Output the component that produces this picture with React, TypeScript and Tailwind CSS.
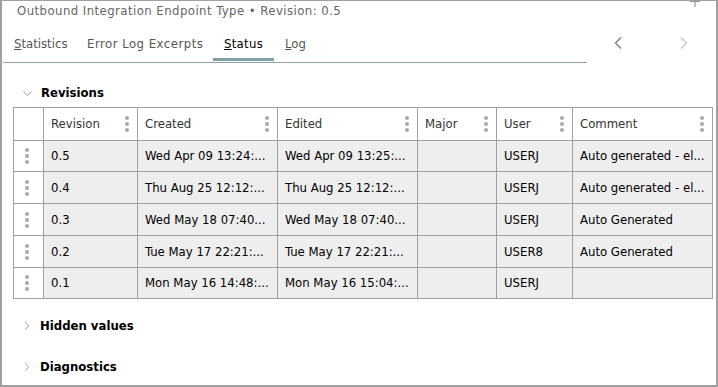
import { ChevronDown, ChevronRight, ChevronLeft } from 'lucide-react';

const cols = ['', 'Revision', 'Created', 'Edited', 'Major', 'User', 'Comment'];

const rows = [
  ['0.5', 'Wed Apr 09 13:24:...', 'Wed Apr 09 13:25:...', '', 'USERJ', 'Auto generated - el...'],
  ['0.4', 'Thu Aug 25 12:12:...', 'Thu Aug 25 12:12:...', '', 'USERJ', 'Auto generated - el...'],
  ['0.3', 'Wed May 18 07:40...', 'Wed May 18 07:40...', '', 'USERJ', 'Auto Generated'],
  ['0.2', 'Tue May 17 22:21:...', 'Tue May 17 22:21:...', '', 'USER8', 'Auto Generated'],
  ['0.1', 'Mon May 16 14:48:...', 'Mon May 16 15:04:...', '', 'USERJ', ''],
];

const gridCols = 'grid grid-cols-[30px_94px_140px_140px_79px_76px_140px]';

function Dots() {
  // kebab handle used in headers and row grips
  return (
    <div className="flex flex-col gap-[2px]">
      <span className="w-[4px] h-[4px] rounded-full bg-[#a8a8a8]" />
      <span className="w-[4px] h-[4px] rounded-full bg-[#a8a8a8]" />
      <span className="w-[4px] h-[4px] rounded-full bg-[#a8a8a8]" />
    </div>
  );
}

function Section({ title, open }: { title: string; open?: boolean }) {
  return (
    <div className="flex items-center h-[20px] pl-[20px] gap-[6px]">
      {open ? (
        <ChevronDown size={15} strokeWidth={1.4} className="text-[#888]" />
      ) : (
        <ChevronRight size={14} strokeWidth={1.4} className="text-[#888]" />
      )}
      <span className="font-bold text-[13px] text-black">{title}</span>
    </div>
  );
}

export default function App() {
  return (
    <div
      className="w-[718px] h-[387px] bg-white relative"
      style={{ fontFamily: '"DejaVu Sans Condensed", "DejaVu Sans", sans-serif' }}
    >
      <div className="absolute inset-0 border-t border-l-2 border-r-2 border-b-2 border-[#a0a0a0] pointer-events-none" />

      {/* clipped plus at top right */}
      <svg className="absolute left-[689px] top-0" width="12" height="8" viewBox="0 0 12 8">
        <path d="M1 1.5 H11 M6 0 V7" stroke="#9a9a9a" strokeWidth="1.2" />
      </svg>

      <div className="pl-[17px] pt-[2px] h-[20px] flex items-center text-[13px] tracking-[0.45px] text-[#666]">
        Outbound Integration Endpoint Type • Revision: 0.5
      </div>

      <div className="flex items-start h-[45px] pt-[13px]">
        <div className="w-[584px] ml-[3px] border-b border-[#8ea3aa] h-[30px] flex pl-[11px] text-[13px]">
          <div className="w-[73px] text-[#555] leading-[22px]"><u>S</u>tatistics</div>
          <div className="w-[126px] text-[#555] leading-[22px] tracking-[0.5px]">Error Log Excerpts</div>
          <div className="w-[61px] flex flex-col items-center">
            <div className="text-black leading-[22px] tracking-[0.3px]"><u>S</u>tatus</div>
            <div className="w-[61px] h-[3px] bg-[#7fa1a9] mt-[3px]" />
          </div>
          <div className="text-[#555] ml-[11px] leading-[22px]"><u>L</u>og</div>
        </div>
        <div className="flex items-center gap-[46px] ml-[21px] mt-[0px]">
          <ChevronLeft size={20} strokeWidth={2} className="text-[#888]" />
          <ChevronRight size={20} strokeWidth={2} className="text-[#ccc]" />
        </div>
      </div>

      <div className="pt-[18px]">
        <Section title="Revisions" open />
      </div>

      <div className="ml-[13px] mt-[4px] w-[700px] border-t border-l border-[#a0a0a0] text-[13px]">
        <div className={`${gridCols} h-[33px]`}>
          {cols.map((c, i) => (
            <div
              key={i}
              className="border-r border-b border-[#a0a0a0] flex items-center justify-between pl-[7px] pr-[8px] text-[#333]"
            >
              <span>{c}</span>
              {i > 0 && <Dots />}
            </div>
          ))}
        </div>
        {rows.map((r, ri) => (
          <div key={ri} className={`${gridCols} ${ri === 0 || ri === 4 ? 'h-[31px]' : 'h-[32px]'}`}>
            <div className="border-r border-b border-[#a0a0a0] flex items-center justify-center pr-[3px] bg-white">
              <Dots />
            </div>
            {r.map((cell, ci) => (
              <div
                key={ci}
                className="border-r border-b border-[#a0a0a0] bg-[#eeeeee] flex items-center pl-[7px] text-black whitespace-nowrap overflow-hidden"
              >
                {cell}
              </div>
            ))}
          </div>
        ))}
      </div>

      <div className="mt-[17px]">
        <Section title="Hidden values" />
      </div>
      <div className="mt-[21px]">
        <Section title="Diagnostics" />
      </div>
    </div>
  );
}
